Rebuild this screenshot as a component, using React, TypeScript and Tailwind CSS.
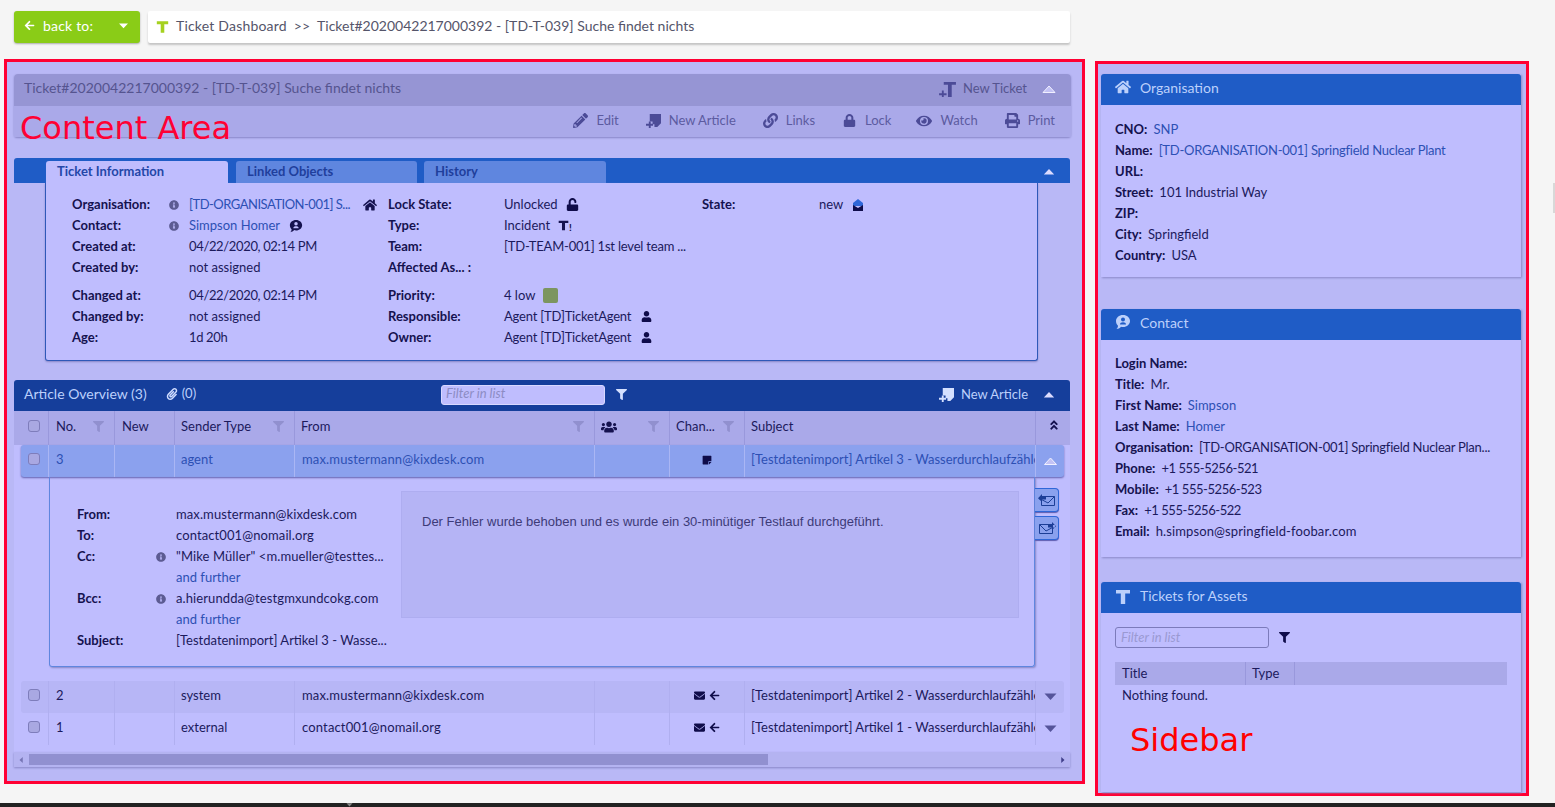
import type { ReactNode } from 'react'
import {
  FaAngleDoubleUp, FaArrowLeft, FaEnvelope, FaEye, FaFilter, FaHome, FaInfoCircle, FaLink, FaLock,
  FaPaperclip, FaPencilAlt, FaPrint, FaStickyNote, FaUnlock, FaUser, FaUsers,
} from 'react-icons/fa'

// small custom icons, the rest comes from react-icons
function TIcon({ className }: { className?: string }) {
  return (
    <svg viewBox="0 0 16 16" className={className} fill="currentColor">
      <path d="M1 1h14v3.500h-4.800V15H5.800V4.500H1z" />
    </svg>
  )
}

function TPlusIcon({ className }: { className?: string }) {
  return (
    <svg viewBox="0 0 18 16" className={className} fill="currentColor">
      <path d="M5 0h13v3h-4.500v13h-4V3H5z" />
      <path d="M3 9h2v3h3v2H5v2H3v-2H0v-2h3z" />
    </svg>
  )
}

function NewArticleIcon({ className }: { className?: string }) {
  return (
    <svg viewBox="0 0 16 16" className={className} fill="currentColor">
      <path d="M4 1h12v10l-4 4H9v-3h-2V9H4z" />
      <path d="M3 9h2v2.500h2.500v2H5V16H3v-2.500H0v-2h3z" />
    </svg>
  )
}

function ContactIcon({ className }: { className?: string }) {
  return (
    <svg viewBox="0 0 16 16" className={className} fill="currentColor">
      <path fillRule="evenodd" d="M8 1c4 0 7 2.700 7 6s-3 6-7 6c-.7 0-1.400-.1-2-.3C5 14 3 15 1.500 15c1-1 1.400-2 1.500-3.300C1.800 10.600 1 8.900 1 7c0-3.300 3-6 7-6zm0 2.500A2 2 0 0 0 8 7.500a2 2 0 0 0 0-4zM5 10.500h6C11 9 9.800 8.300 8 8.300S5 9 5 10.500z" />
    </svg>
  )
}

function Caret({ up = false, outline = false, className }: { up?: boolean; outline?: boolean; className?: string }) {
  return (
    <svg viewBox="0 0 14 8" className={className}>
      <polygon
        points={up ? '1,7.500 7,1 13,7.500' : '1,.5 7,7 13,.5'}
        fill={outline ? '#c3c2f5' : 'currentColor'}
        stroke={outline ? '#f1f0ff' : 'none'}
      />
    </svg>
  )
}

function MailArrow({ reply = false }: { reply?: boolean }) {
  return (
    <span className="flex h-[24px] w-[24px] items-center justify-center rounded-r-[4px] border-[1px] border-l-0 border-[#2f67d8] bg-[#8aa1ee] shadow-[0_1px_1px_#5d5cb0]">
      <svg viewBox="0 0 18 12" className="h-[12px] w-[18px] text-[#1c3e96]" fill="none" stroke="currentColor">
        <path d={reply ? 'M3.500 2.500h13v9h-13zM3.500 5.500 10 9l6.500-6.500' : 'M1.500 2.500h13v9h-13zM1.500 2.500 8 9l6.500-3.500'} />
        {reply
          ? <path d="M1 3h7V5.500H1zM4 0v8L0 4.200z" fill="currentColor" stroke="none" />
          : <path d="M10 3h7v2.500h-7zM14 0v8l4-3.800z" fill="currentColor" stroke="none" />}
      </svg>
    </span>
  )
}

function ActionItem({ icon, label, className }: { icon: ReactNode; label: string; className?: string }) {
  return (
    <span className={`flex items-center gap-[8px] ${className ?? ''}`}>
      <span className="text-[#4c4b97]">{icon}</span>
      {label}
    </span>
  )
}

function Row({ label, labelWidth, info, children }: { label: string; labelWidth: string; info?: boolean; children?: ReactNode }) {
  return (
    <div className="flex h-[21px] items-center">
      <span className={`${labelWidth} flex shrink-0 items-center justify-between pr-[10px] font-bold text-[#15124f]`}>
        {label}
        {info && <FaInfoCircle className="text-[10px] text-[#5c5b92]" />}
      </span>
      <span className="flex items-center gap-[8px] whitespace-nowrap text-[#1c1a5c]">{children}</span>
    </div>
  )
}

function Link({ children, className }: { children: ReactNode; className?: string }) {
  return <span className={`text-[#2d50b4] ${className ?? ''}`}>{children}</span>
}

function Checkbox({ className }: { className?: string }) {
  return <span className={`block h-[12px] w-[12px] rounded-[3px] border-[1px] border-[#7e7dbb] bg-[#a9a8e2] ${className ?? ''}`} />
}

const ROW_GRID = 'grid h-[32px] w-[1043px] grid-cols-[27px_66px_60px_120px_300px_75px_75px_291px_1fr] items-stretch'

function Cell({ border, children, center }: { border: string; children?: ReactNode; center?: boolean }) {
  return (
    <div className={`flex items-center overflow-hidden whitespace-nowrap border-l-[1px] pb-[3px] ${center ? 'justify-center gap-[4px]' : 'pl-[6px]'} ${border}`}>
      {children}
    </div>
  )
}

function ArticleRow({ no, sender, from, channel, subject, open, shaded }: {
  no: string; sender: string; from: string; channel: ReactNode; subject: string; open?: boolean; shaded?: boolean
}) {
  const border = open ? 'border-[#aab6f4]' : 'border-[#b0aff0]'
  const text = open ? 'text-[#2d50b4]' : 'text-[#1c1a5c]'
  return (
    <div className={`${ROW_GRID} ml-[7px] rounded-[3px] ${text} ${open ? 'bg-[#8ba1ee] shadow-[0_1px_2px_#6261b0]' : shaded ? 'bg-[#b7b6f6]' : ''}`}>
      <div className="flex items-center pb-[4px] pl-[7px]"><Checkbox /></div>
      <Cell border={border}><span className="pl-[1px]">{no}</span></Cell>
      <Cell border={border} />
      <Cell border={border}>{sender}</Cell>
      <Cell border={border}><span className="pl-[1px] tracking-[0.15px]">{from}</span></Cell>
      <Cell border={border} />
      <Cell border={border} center>{channel}</Cell>
      <Cell border={border}>{subject}</Cell>
      <div className={`flex items-center justify-center border-l-[1px] pb-[1px] pl-[1px] ${border}`}>
        {open ? <Caret up outline className="h-[8px] w-[15px]" /> : <Caret className="h-[8px] w-[15px] text-[#55549a]" />}
      </div>
    </div>
  )
}

function HeadCell({ label, filter, inset, children }: { label?: string; filter?: boolean; inset?: boolean; children?: ReactNode }) {
  return (
    <div className={`flex items-center justify-between overflow-hidden whitespace-nowrap border-l-[1px] border-[#9998dc] pb-[3px] pr-[10px] ${inset ? 'pl-[7px]' : 'pl-[6px]'}`}>
      {label ?? children}
      {filter && <FaFilter className="text-[11px] text-[#9190cf]" />}
    </div>
  )
}

function SidebarPanel({ icon, title, className, children }: { icon: ReactNode; title: string; className?: string; children: ReactNode }) {
  return (
    <section className={`shadow-[1px_1px_2px_#8a89c8] ${className ?? ''}`}>
      <h2 className="flex h-[31px] items-center gap-[9px] rounded-t-[3px] bg-[#1f5cc6] pb-[5px] pl-[14px] text-[14px] font-normal text-[#bcd0fb]">
        <span className="flex w-[16px] justify-center">{icon}</span>
        {title}
      </h2>
      <div className="bg-[#bfbdfe] px-[14px]">{children}</div>
    </section>
  )
}

function SidebarRow({ label, children }: { label: string; children?: ReactNode }) {
  return (
    <div className="flex h-[21px] items-center gap-[6px] whitespace-nowrap text-[#1c1a5c]">
      <b className="text-[#15124f]">{label}</b>
      {children}
    </div>
  )
}

const ACTIONS = [
  { label: 'Edit', icon: <FaPencilAlt className="text-[15px]" /> },
  { label: 'New Article', icon: <NewArticleIcon className="h-[15px] w-[15px]" /> },
  { label: 'Links', icon: <FaLink className="text-[15px]" /> },
  { label: 'Lock', icon: <FaLock className="mx-[1px] text-[13px]" /> },
  { label: 'Watch', icon: <FaEye className="text-[16px]" />, className: '-ml-[2px]' },
  { label: 'Print', icon: <FaPrint className="text-[15px]" /> },
]

const L1 = 'w-[117px]'
const L2 = 'w-[116px]'
const DET = 'w-[99px]'
const DIGITS = 'tracking-[-0.35px]'
const CAPS = 'tracking-[-0.2px]'
const MAIL = 'tracking-[0.1px]'
const PHONE = 'tracking-[-0.45px]'

export default function App() {
  return (
    <div className="relative flex h-[807px] flex-col overflow-hidden bg-[#f5f5f5] font-['Lato',sans-serif] text-[13px]">
      {/* Top bar */}
      <div className="flex gap-[8px] pl-[14px] pt-[11px]">
        <button className="flex h-[32px] w-[126px] items-center rounded-[3px] bg-[#8acc17] pb-[3px] pl-[10px] pr-[11px] text-[14px] text-white shadow-[0_1px_2px_#aaa]">
          <FaArrowLeft className="text-[11px]" />
          <span className="ml-[8px] tracking-[0.2px]">back to:</span>
          <Caret className="ml-auto h-[6px] w-[11px]" />
        </button>
        <div className="flex h-[32px] w-[922px] items-center rounded-[2px] bg-white pb-[3px] pl-[8px] text-[14px] text-[#55556a] shadow-[0_2px_2px_#c4c4c4]">
          <TIcon className="mr-[7px] mt-[3px] h-[14px] w-[13px] text-[#a5d11f]" />
          <span className="tracking-[0.2px]">Ticket Dashboard</span>
          <span className="mx-[7px]">&gt;&gt;</span>Ticket#2020042217000392 - [TD-T-039] Suche findet nichts
        </div>
      </div>

      <div className="mt-[16px] flex gap-[10px] pl-[4px]">
        {/* Content area */}
        <main className="h-[725px] w-[1081px] shrink-0 border-[3px] border-[#ff0033] bg-[#b9b8f6] pl-[7px] pt-[12px]">
          <div className="w-[1057px] rounded-[3px] shadow-[0_1px_2px_#8786c6]">
            <div className="flex h-[32px] items-center rounded-t-[4px] bg-[#9695d4] pb-[5px] pl-[10px] pr-[15px] text-[14px] text-[#55548f]">
              Ticket#2020042217000392 - [TD-T-039] Suche findet nichts
              <span className="ml-auto flex items-center gap-[7px] pt-[3px] text-[13px]">
                <TPlusIcon className="h-[15px] w-[17px] text-[#4c4b97]" />
                New Ticket
              </span>
              <Caret up outline className="ml-[15px] mt-[3px] h-[8px] w-[14px]" />
            </div>
            <div className="flex h-[31px] items-center justify-end gap-[27px] bg-[#aaa9e9] pb-[2px] pr-[16px] text-[#5c5ba0]">
              {ACTIONS.map(a => <ActionItem key={a.label} icon={a.icon} label={a.label} className={a.className} />)}
            </div>
          </div>

          {/* Ticket info lane */}
          <div className="mt-[21px] w-[1056px]">
            <div className="flex h-[25px] items-end rounded-t-[3px] bg-[#1f5cc6] pl-[32px] pr-[15px] font-bold">
              <span className="flex h-[22px] w-[182px] items-center rounded-t-[3px] bg-[#bfbdfe] pl-[11px] text-[#2447a8]">Ticket Information</span>
              <span className="ml-[8px] flex h-[22px] w-[181px] items-center rounded-t-[3px] bg-[#5f86df] pl-[11px] text-[#1f3f9c]">Linked Objects</span>
              <span className="ml-[7px] flex h-[22px] w-[182px] items-center rounded-t-[3px] bg-[#5f86df] pl-[11px] text-[#1f3f9c]">History</span>
              <Caret up className="mb-[8px] ml-auto h-[7px] w-[12px] text-[#dcdcff]" />
            </div>
            <div className="ml-[31px] flex h-[178px] w-[993px] rounded-b-[3px] border-[1px] border-t-0 border-[#2f58b8] bg-[#bfbdfe] pl-[26px] pt-[11px] shadow-[0_1px_2px_#8786c6]">
              <div className="w-[316px]">
                <Row label="Organisation:" labelWidth={L1} info><Link className="tracking-[-0.5px]">[TD-ORGANISATION-001] S...</Link><FaHome className="ml-[5px] text-[14px] text-[#15124f]" /></Row>
                <Row label="Contact:" labelWidth={L1} info><Link>Simpson Homer</Link><ContactIcon className="ml-[1px] h-[14px] w-[14px] text-[#15124f]" /></Row>
                <Row label="Created at:" labelWidth={L1}><span className={DIGITS}>04/22/2020, 02:14 PM</span></Row>
                <Row label="Created by:" labelWidth={L1}>not assigned</Row>
                <div className="h-[7px]" />
                <Row label="Changed at:" labelWidth={L1}><span className={DIGITS}>04/22/2020, 02:14 PM</span></Row>
                <Row label="Changed by:" labelWidth={L1}>not assigned</Row>
                <Row label="Age:" labelWidth={L1}><span className={DIGITS}>1d 20h</span></Row>
              </div>
              <div className="w-[314px]">
                <Row label="Lock State:" labelWidth={L2}>Unlocked<FaUnlock className="text-[13px] text-[#0f0c4a]" /></Row>
                <Row label="Type:" labelWidth={L2}>Incident<span className="flex items-end"><TIcon className="h-[13px] w-[11px] text-[#15124f]" /><span className="text-[10px] font-bold leading-[10px] text-[#15124f]">!</span></span></Row>
                <Row label="Team:" labelWidth={L2}><span className={CAPS}>[TD-TEAM-001] 1st level team ...</span></Row>
                <Row label="Affected As... :" labelWidth={L2} />
                <div className="h-[7px]" />
                <Row label="Priority:" labelWidth={L2}>4 low<span className="block h-[15px] w-[15px] rounded-[2px] bg-[#7c9560]" /></Row>
                <Row label="Responsible:" labelWidth={L2}><span className={CAPS}>Agent [TD]TicketAgent</span><FaUser className="ml-[2px] text-[11px] text-[#0f0c4a]" /></Row>
                <Row label="Owner:" labelWidth={L2}><span className={CAPS}>Agent [TD]TicketAgent</span><FaUser className="ml-[2px] text-[11px] text-[#0f0c4a]" /></Row>
              </div>
              <div>
                <Row label="State:" labelWidth={L1}>new
                  <svg viewBox="0 0 12 12" className="ml-[1px] h-[12px] w-[12px]">
                    <path d="M1 4 6 0l5 4v3H1z" fill="#2f67d8" />
                    <path d="M1 6l5 3 5-3v6H1z" fill="#0f0c4a" />
                  </svg>
                </Row>
              </div>
            </div>
          </div>

          {/* Article overview */}
          <div className="mt-[19px] w-[1056px]">
            <div className="relative flex h-[31px] items-center rounded-t-[3px] bg-[#153e9b] pb-[4px] pl-[10px] pr-[15px] text-[#bcd0fb]">
              <span className="text-[14px]">Article Overview (3)</span>
              <FaPaperclip className="ml-[19px] text-[12px] text-[#cfdcff]" />
              <span className="ml-[4px]">(0)</span>
              <span className="absolute left-[427px] top-[5px] flex h-[20px] w-[164px] items-center rounded-[3px] border-[1px] border-[#d9d8ff] bg-[#bfbdfe] pb-[2px] pl-[4px] italic text-[#8d8cc4]">Filter in list</span>
              <FaFilter className="absolute left-[602px] top-[9px] text-[11px] text-[#d4e0ff]" />
              <span className="ml-auto flex items-center gap-[7px] pt-[2px]">
                <NewArticleIcon className="h-[15px] w-[15px] text-[#d4e0ff]" />
                New Article
              </span>
              <Caret up className="ml-[15px] mt-[2px] h-[7px] w-[12px] text-[#dcdcff]" />
            </div>
            <div className="grid h-[34px] grid-cols-[34px_66px_60px_120px_300px_75px_75px_291px_1fr] items-stretch bg-[#aaa9e9] text-[#1c1a5c]">
              <div className="flex items-center pb-[4px] pl-[14px]"><Checkbox /></div>
              <HeadCell label="No." filter inset />
              <HeadCell label="New" inset />
              <HeadCell label="Sender Type" filter />
              <HeadCell label="From" filter />
              <HeadCell filter><FaUsers className="text-[16px] text-[#15124f]" /></HeadCell>
              <HeadCell label="Chan..." filter />
              <HeadCell label="Subject" />
              <div className="flex items-center justify-center border-l-[1px] border-[#9998dc] pb-[7px] pl-[1px]">
                <FaAngleDoubleUp className="text-[12px] text-[#15124f]" />
              </div>
            </div>
            <div className="h-[307px] bg-[#bfbdfe]">
              <ArticleRow
                open
                no="3"
                sender="agent"
                from="max.mustermann@kixdesk.com"
                channel={<FaStickyNote className="text-[10px] text-[#0f0c4a]" />}
                subject="[Testdatenimport] Artikel 3 - Wasserdurchlaufzähler defekt"
              />
              <div className="flex items-start">
                <div className="ml-[35px] flex h-[190px] w-[986px] rounded-b-[3px] border-[1px] border-t-0 border-[#5f86df] pl-[27px] pt-[27px] shadow-[1px_1px_2px_#8786c6]">
                  <div className="w-[324px]">
                    <Row label="From:" labelWidth={DET}><span className={MAIL}>max.mustermann@kixdesk.com</span></Row>
                    <Row label="To:" labelWidth={DET}><span className={MAIL}>contact001@nomail.org</span></Row>
                    <Row label="Cc:" labelWidth={DET} info><span className={MAIL}>"Mike Müller" &lt;m.mueller@testtes...</span></Row>
                    <Row label="" labelWidth={DET}><Link>and further</Link></Row>
                    <Row label="Bcc:" labelWidth={DET} info><span className={MAIL}>a.hierundda@testgmxundcokg.com</span></Row>
                    <Row label="" labelWidth={DET}><Link>and further</Link></Row>
                    <Row label="Subject:" labelWidth={DET}>[Testdatenimport] Artikel 3 - Wasse...</Row>
                  </div>
                  <div className="-mt-[13px] h-[127px] w-[618px] border-[1px] border-[#aeadf0] bg-[#b5b4f5] pl-[20px] pt-[22px] font-['Liberation_Sans',sans-serif] text-[13px] leading-[16px] text-[#3d3b78]">
                    Der Fehler wurde behoben und es wurde ein 30-minütiger Testlauf durchgeführt.
                  </div>
                </div>
                <div className="mt-[11px] flex flex-col gap-[4px]">
                  <MailArrow reply />
                  <MailArrow />
                </div>
              </div>
              <div className="mt-[14px]">
                <ArticleRow
                  shaded
                  no="2"
                  sender="system"
                  from="max.mustermann@kixdesk.com"
                  channel={<><FaEnvelope className="text-[11px] text-[#0f0c4a]" /><FaArrowLeft className="text-[11px] text-[#0f0c4a]" /></>}
                  subject="[Testdatenimport] Artikel 2 - Wasserdurchlaufzähler defekt"
                />
                <ArticleRow
                  no="1"
                  sender="external"
                  from="contact001@nomail.org"
                  channel={<><FaEnvelope className="text-[11px] text-[#0f0c4a]" /><FaArrowLeft className="text-[11px] text-[#0f0c4a]" /></>}
                  subject="[Testdatenimport] Artikel 1 - Wasserdurchlaufzähler defekt"
                />
              </div>
            </div>
            <div className="flex h-[15px] items-center bg-[#b4b3f1] shadow-[0_1px_2px_#8786c6]">
              <Caret up className="ml-[3px] h-[4px] w-[8px] -rotate-90 text-[#7675b5]" />
              <span className="ml-[4px] h-[11px] w-[739px] bg-[#9190d0]" />
              <Caret up className="ml-auto mr-[3px] h-[4px] w-[8px] rotate-90 text-[#3f3e8a]" />
            </div>
          </div>
        </main>

        {/* Sidebar */}
        <aside className="mt-[2px] flex h-[735px] w-[434px] shrink-0 flex-col border-[3px] border-[#ff0033] bg-[#b9b8f6] pl-[3px] pr-[5px] pt-[10px]">
          <SidebarPanel icon={<FaHome className="text-[16px]" />} title="Organisation">
            <div className="pb-[11px] pt-[14px]">
              <SidebarRow label="CNO:"><Link>SNP</Link></SidebarRow>
              <SidebarRow label="Name:"><Link className="tracking-[-0.25px]">[TD-ORGANISATION-001] Springfield Nuclear Plant</Link></SidebarRow>
              <SidebarRow label="URL:" />
              <SidebarRow label="Street:">101 Industrial Way</SidebarRow>
              <SidebarRow label="ZIP:" />
              <SidebarRow label="City:">Springfield</SidebarRow>
              <SidebarRow label="Country:">USA</SidebarRow>
            </div>
          </SidebarPanel>
          <SidebarPanel icon={<ContactIcon className="h-[16px] w-[16px]" />} title="Contact" className="mt-[32px]">
            <div className="pb-[15px] pt-[13px]">
              <SidebarRow label="Login Name:" />
              <SidebarRow label="Title:">Mr.</SidebarRow>
              <SidebarRow label="First Name:"><Link>Simpson</Link></SidebarRow>
              <SidebarRow label="Last Name:"><Link>Homer</Link></SidebarRow>
              <SidebarRow label="Organisation:"><span className="tracking-[-0.25px]">[TD-ORGANISATION-001] Springfield Nuclear Plan...</span></SidebarRow>
              <SidebarRow label="Phone:"><span className={PHONE}>+1 555-5256-521</span></SidebarRow>
              <SidebarRow label="Mobile:"><span className={PHONE}>+1 555-5256-523</span></SidebarRow>
              <SidebarRow label="Fax:"><span className={PHONE}>+1 555-5256-522</span></SidebarRow>
              <SidebarRow label="Email:"><span className="tracking-[0.12px]">h.simpson@springfield-foobar.com</span></SidebarRow>
            </div>
          </SidebarPanel>
          <SidebarPanel icon={<TIcon className="mt-[3px] h-[16px] w-[16px]" />} title="Tickets for Assets" className="mt-[25px]">
            <div className="h-[179px] pt-[14px]">
              <div className="flex items-center">
                <span className="flex h-[21px] w-[154px] items-center rounded-[3px] border-[1px] border-[#7c7bbb] pl-[5px] italic text-[#9a99d2]">Filter in list</span>
                <FaFilter className="ml-[10px] text-[11px] text-[#0f0c4a]" />
              </div>
              <div className="mt-[14px] flex h-[23px] w-[392px] items-center bg-[#aaa9e9] text-[#1c1a5c]">
                <span className="flex h-full w-[130px] items-center pl-[7px]">Title</span>
                <span className="flex h-full w-[50px] items-center border-x-[1px] border-[#9998dc] pl-[6px]">Type</span>
              </div>
              <p className="mt-[2px] pl-[7px] leading-[17px] text-[#1c1a5c]">Nothing found.</p>
            </div>
          </SidebarPanel>
        </aside>
      </div>

      {/* Annotations drawn over the screenshot */}
      <span className="absolute left-[20px] top-[106px] font-['DejaVu_Sans',sans-serif] text-[32px] leading-[44px] text-[#ff0033]">Content Area</span>
      <span className="absolute left-[1130px] top-[718px] font-['DejaVu_Sans',sans-serif] text-[32px] leading-[44px] text-[#ff0000]">Sidebar</span>
      <span className="absolute left-[1553px] top-[183px] h-[30px] w-[2px] bg-[#d8d8d8]" />

      {/* Bottom edge */}
      <div className="mt-auto flex h-[4px] bg-[#222222] pl-[346px]">
        <Caret className="h-[4px] w-[7px] text-[#8a8a8a]" />
      </div>
    </div>
  )
}
